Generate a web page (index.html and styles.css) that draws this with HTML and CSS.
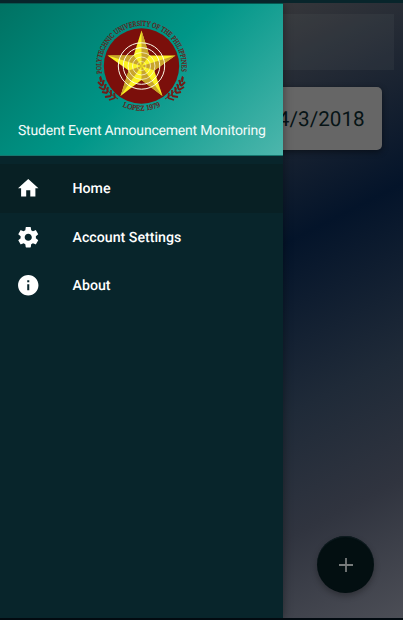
FILE: index.html
```html
<!DOCTYPE html>
<html lang="en">
<head>
<meta charset="utf-8">
<title>Student Event Announcement Monitoring</title>
<link rel="stylesheet" href="styles.css">
</head>
<body>
<main class="screen">
  <section class="content">
    <div class="banner"></div>
    <div class="date-card">4/3/2018</div>
    <button class="fab" aria-label="Add"><svg width="24" height="24" viewBox="0 0 24 24"><path d="M12 5v14M5 12h14" stroke="#777b7b" stroke-width="1.8"/></svg></button>
  </section>
  <aside class="drawer">
    <header class="drawer-header">
      <svg class="seal" viewBox="0 0 104 104">
        <defs>
          <path id="arc-top" d="M12 58.5A40.2 40.2 0 1 1 91 58.5"/>
          <path id="arc-bottom" d="M29 89.5A44.5 44.5 0 0 0 74 89.5"/>
          <g id="laurel" fill="none" stroke="#711c18" stroke-width="1.8">
            <path d="M10.5 61Q14 76 28 84" stroke-width="1"/>
            <path d="M11 67L10 62M12 71L8 67M12 71L14 65M14 75L9 72M14 75L16 69M17 78L12 77M17 78L18 72M21 81L15 82M21 81L21 75M25 83L19 85M25 83L24 78"/>
          </g>
        </defs>
        <circle cx="51.5" cy="51" r="37.7" fill="#7b0f0b"/>
        <path fill="#fbf222" d="M51.5 15.5L59.3 40.5L85.5 40.5L64.3 55.5L72.5 81L51.5 65L30.5 81L38.7 55.5L17.5 40.5L43.7 40.5Z"/>
        <path fill="#c8a52c" d="M51.5 15.5L59.3 40.5L51.5 51ZM85.5 40.5L64.3 55.5L51.5 51ZM72.5 81L51.5 65L51.5 51ZM30.5 81L38.7 55.5L51.5 51ZM17.5 40.5L43.7 40.5L51.5 51Z"/>
        <g fill="none" stroke="#fffbe8" stroke-width="1">
          <circle cx="51.5" cy="51" r="23.2"/><circle cx="51.5" cy="51" r="18.3"/><circle cx="51.5" cy="51" r="13.5" stroke-width=".7"/><circle cx="51.5" cy="51" r="9" stroke-width=".7"/><circle cx="51.5" cy="51" r="4.5" stroke-width=".5"/>
        </g>
        <text class="seal-text"><textPath href="#arc-top" textLength="139" lengthAdjust="spacingAndGlyphs">POLYTECHNIC UNIVERSITY OF THE PHILIPPINES</textPath></text>
        <text class="seal-text"><textPath href="#arc-bottom" startOffset="4" textLength="39" lengthAdjust="spacingAndGlyphs">LOPEZ 1979</textPath></text>
        <use href="#laurel"/>
        <use href="#laurel" transform="translate(103 0) scale(-1 1)"/>
      </svg>
      <h1 class="title">Student Event Announcement Monitoring</h1>
    </header>
    <nav class="menu">
      <a class="item active"><svg viewBox="0 0 24 24"><path d="M10 20v-6h4v6h5v-8h3L12 3 2 12h3v8z"/></svg><span>Home</span></a>
      <a class="item"><svg viewBox="0 0 24 24"><path d="M19.43 12.98c.04-.32.07-.64.07-.98s-.03-.66-.07-.98l2.11-1.65c.19-.15.24-.42.12-.64l-2-3.46c-.12-.22-.39-.3-.61-.22l-2.49 1c-.52-.4-1.08-.73-1.69-.98l-.38-2.65C14.46 2.18 14.25 2 14 2h-4c-.25 0-.46.18-.49.42l-.38 2.65c-.61.25-1.17.59-1.69.98l-2.49-1c-.23-.09-.49 0-.61.22l-2 3.46c-.13.22-.07.49.12.64l2.11 1.65c-.04.32-.07.65-.07.98s.03.66.07.98l-2.11 1.65c-.19.15-.24.42-.12.64l2 3.46c.12.22.39.3.61.22l2.49-1c.52.4 1.08.73 1.69.98l.38 2.65c.03.24.24.42.49.42h4c.25 0 .46-.18.49-.42l.38-2.65c.61-.25 1.17-.59 1.69-.98l2.49 1c.23.09.49 0 .61-.22l2-3.46c.12-.22.07-.49-.12-.64l-2.11-1.65zM12 15.5c-1.93 0-3.5-1.57-3.5-3.5s1.57-3.5 3.5-3.5 3.5 1.57 3.5 3.5-1.57 3.5-3.5 3.5z"/></svg><span>Account Settings</span></a>
      <a class="item"><svg viewBox="0 0 24 24"><path d="M12 2C6.48 2 2 6.48 2 12s4.48 10 10 10 10-4.48 10-10S17.52 2 12 2zm1 15h-2v-6h2v6zm0-8h-2V7h2v2z"/></svg><span>About</span></a>
    </nav>
  </aside>
</main>
</body>
</html>
```
FILE: styles.css
```css
* { box-sizing: border-box; }
body { margin: 0; font-family: Roboto, sans-serif; text-rendering: geometricPrecision; }
.screen {
  position: relative;
  width: 403px;
  height: 620px;
  overflow: hidden;
  border-top: 3px solid #08252b;
  border-bottom: 2px solid #020a10;
  background: linear-gradient(153deg, #50504c 0%, #35363a 18%, #04142a 47%, #1f2a38 68%, #30343f 83%, #4c4e56 100%);
}
.content {
  display: flex;
  flex-direction: column;
  align-items: flex-end;
  height: 100%;
  padding-top: 11px;
}
.banner {
  width: 385px;
  height: 56px;
  margin-right: 9px;
  background: rgba(100, 105, 105, .13);
}
.date-card {
  width: 361px;
  height: 63px;
  margin: 17px 21px 0 0;
  padding-right: 17.3px;
  border-radius: 5px;
  background: #666;
  box-shadow: 0 2px 6px rgba(0, 0, 0, .45);
  color: #071416;
  font-size: 20.7px;
  line-height: 66px;
  text-align: right;
}
.fab {
  display: flex;
  align-items: center;
  justify-content: center;
  width: 57px;
  height: 57px;
  margin: auto 29px 25px 0;
  padding: 0;
  border: 0;
  border-radius: 50%;
  background: #030f11;
  box-shadow: 0 3px 6px rgba(0, 0, 0, .3), inset 0 1px 1px #101d22;
}
.drawer {
  position: absolute;
  top: 0;
  left: 0;
  width: 283px;
  height: 616px;
  background: #08252b;
  box-shadow: 0 0 9px rgba(0, 0, 0, .4);
}
.drawer-header {
  display: flex;
  flex-direction: column;
  height: 153px;
  padding: 11px 0 0 18px;
  border-top: 1px solid #055851;
  border-bottom: 1px solid #16766e;
  background: linear-gradient(135deg, #007263 0%, #009688 50%, #4db6ac 100%);
}
.seal { width: 104px; height: 104px; margin-left: 72px; }
.seal-text { font: 7.5px "Liberation Serif", serif; fill: #661b17; stroke: #661b17; stroke-width: .25; }
.title {
  margin: 2px 0 0;
  color: #f3fbfa;
  font-size: 14px;
  font-weight: 400;
  letter-spacing: -.2px;
  line-height: 21px;
  white-space: nowrap;
}
.menu { padding-top: 8px; }
.item {
  display: flex;
  align-items: center;
  height: 48.5px;
  padding-left: 16px;
  color: #fff;
  font-size: 14.2px;
  font-weight: 500;
}
.item span { padding-top: 2px; }
.item svg { width: 24.5px; height: 24.5px; margin-right: 32px; fill: #fff; }
.active { background: #082024; }
```
